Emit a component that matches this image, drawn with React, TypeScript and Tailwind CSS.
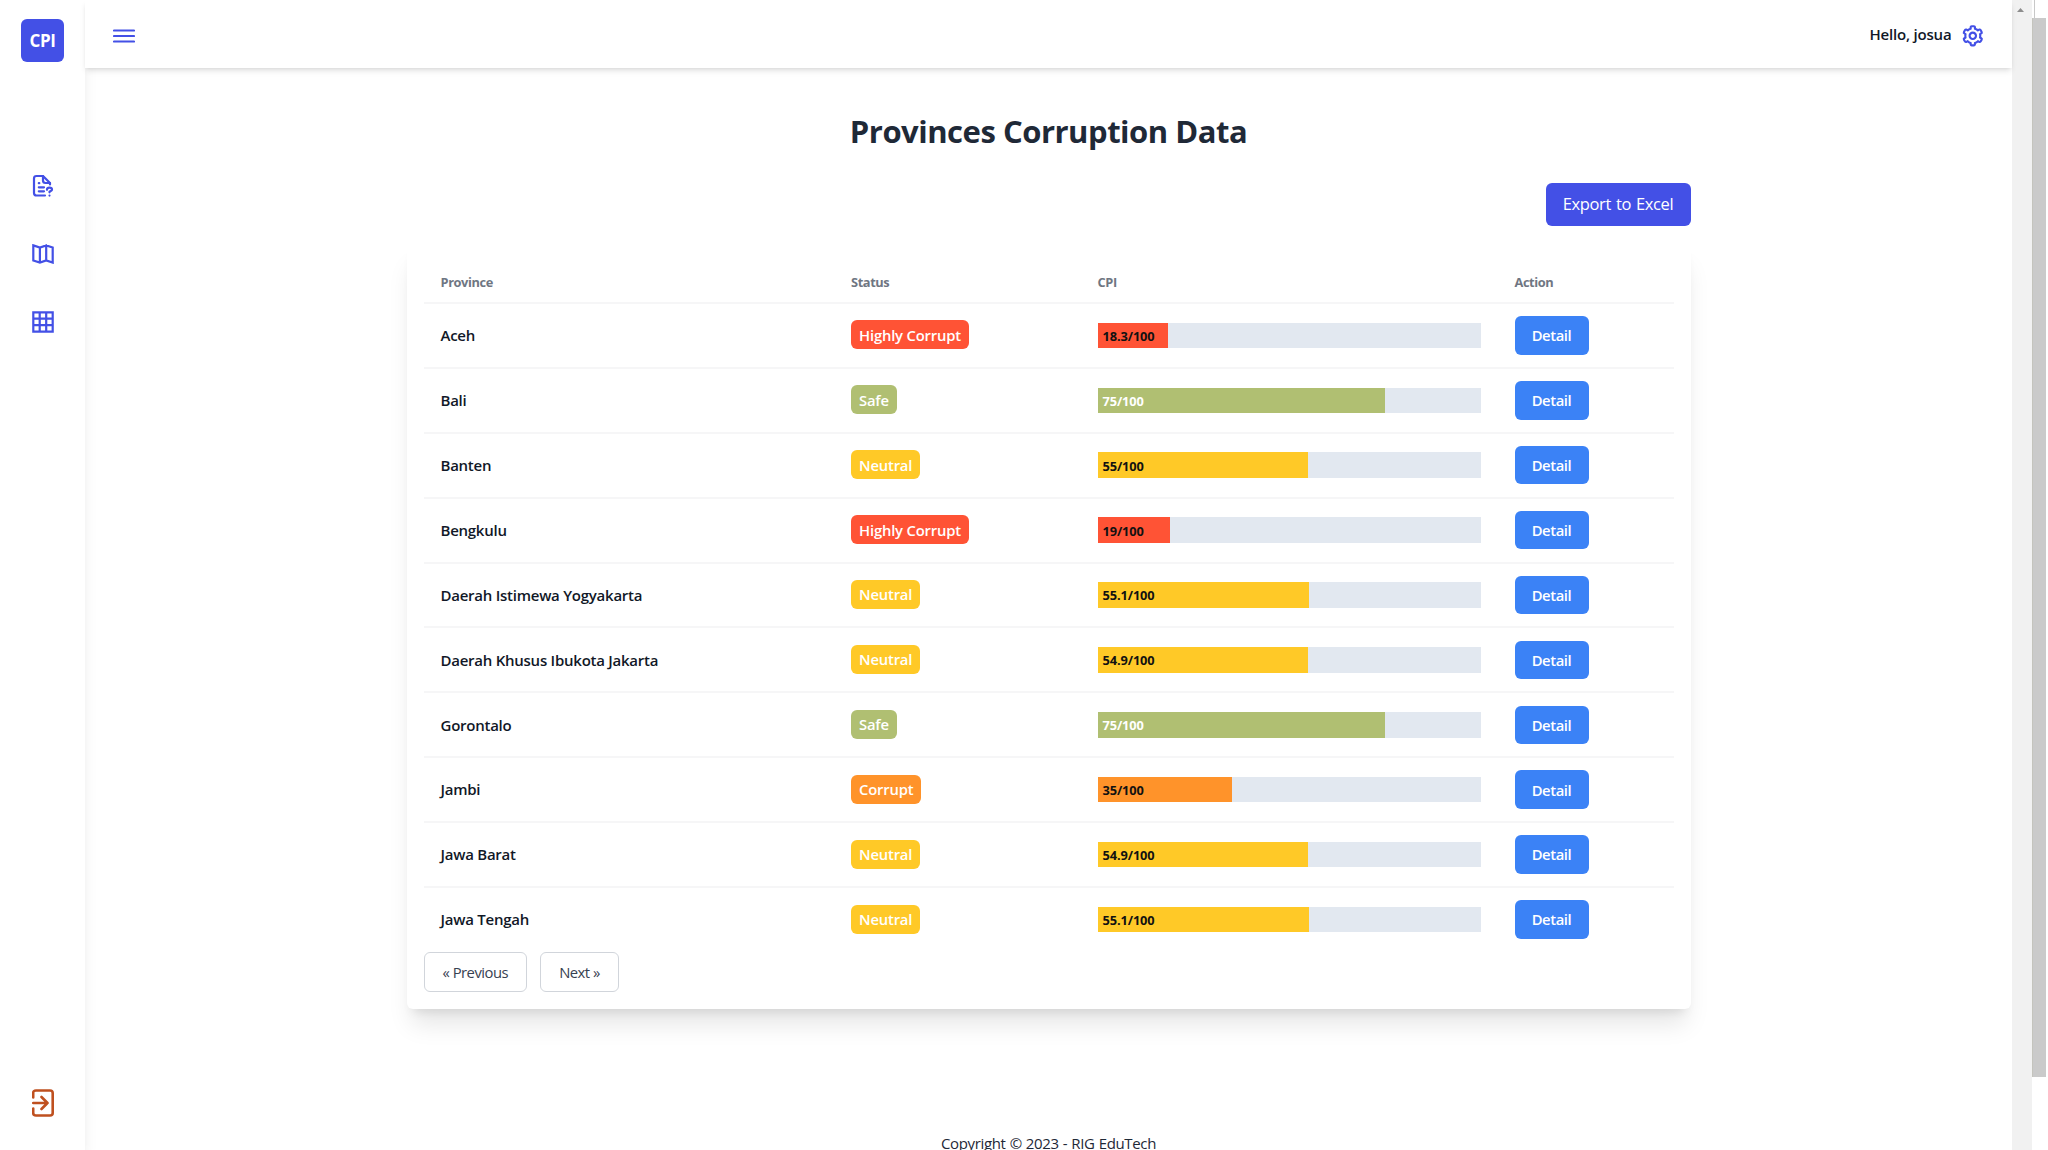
import type { ReactNode } from "react";
import { BiCog } from "react-icons/bi";

type Status = "Highly Corrupt" | "Corrupt" | "Neutral" | "Safe";

const COLORS: Record<Status, string> = {
  "Highly Corrupt": "bg-[#ff5335]",
  Corrupt: "bg-[#ff932a]",
  Neutral: "bg-[#ffc927]",
  Safe: "bg-[#b0bf72]",
};

const ROWS: { name: string; status: Status; cpi: number }[] = [
  { name: "Aceh", status: "Highly Corrupt", cpi: 18.3 },
  { name: "Bali", status: "Safe", cpi: 75 },
  { name: "Banten", status: "Neutral", cpi: 55 },
  { name: "Bengkulu", status: "Highly Corrupt", cpi: 19 },
  { name: "Daerah Istimewa Yogyakarta", status: "Neutral", cpi: 55.1 },
  { name: "Daerah Khusus Ibukota Jakarta", status: "Neutral", cpi: 54.9 },
  { name: "Gorontalo", status: "Safe", cpi: 75 },
  { name: "Jambi", status: "Corrupt", cpi: 35 },
  { name: "Jawa Barat", status: "Neutral", cpi: 54.9 },
  { name: "Jawa Tengah", status: "Neutral", cpi: 55.1 },
];

const GRID = "grid grid-cols-[410.5px_246.5px_417px_1fr] items-center";

function Icon({ w, h, children }: { w: number; h: number; children: ReactNode }) {
  return (
    <svg width={w} height={h} viewBox={`0 0 ${w} ${h}`} fill="none" stroke="currentColor" strokeWidth="2.200" strokeLinecap="round" strokeLinejoin="round">
      {children}
    </svg>
  );
}

function Sidebar() {
  return (
    <aside className="flex w-[85px] shrink-0 flex-col items-center bg-white pt-[19px] pb-[33px] text-[#4350e6] shadow-lg">
      <div className="flex h-[43px] w-[43px] items-center justify-center rounded-md bg-[#4350e6] text-[17px] font-bold tracking-[-0.4px] text-white">
        CPI
      </div>
      <nav className="mt-[112px] flex flex-col items-center">
        <a className="flex h-6 items-center">
          <Icon w={22} h={24}>
            <path d="M13 21.500H4.500Q2 21.500 2 19V4.500Q2 2 4.500 2H11L18 9V10.500" />
            <path d="M11 2V6.500Q11 9 13.500 9H18" />
            <path d="M6.800 9.200H7.300M6.800 13.300H12M6.800 17.300H12" />
            <path d="M15 15.800Q15 13.600 17.500 13.600T20 15.600Q20 16.900 17.500 17.600V18.300M17.500 21.500V21.600" />
          </Icon>
        </a>
        <a className="mt-11 flex h-6 items-center">
          <Icon w={22} h={20}>
            <path d="M1.300 1.400 7.900 3.500 14.200 1.400 20.700 3.500V18.600L14.200 16.500 7.900 18.600 1.300 16.500ZM7.900 3.500V18.600M14.200 1.400V16.500" strokeLinejoin="miter" />
          </Icon>
        </a>
        <a className="mt-11 flex h-6 items-center">
          <Icon w={22} h={22}>
            <path d="M1.300 1.300H20.700V20.700H1.300ZM1.300 7.700H20.700M1.300 14.200H20.700M7.700 1.300V20.700M14.200 1.300V20.700" strokeLinejoin="miter" />
          </Icon>
        </a>
      </nav>
      <a className="mt-auto text-[#bf501f]">
        <Icon w={22} h={28}>
          <path d="M1.200 8.500V4Q1.200 1.500 4 1.500H18Q20.700 1.500 20.700 4V24Q20.700 26.500 18 26.500H4Q1.200 26.500 1.200 24V19.500M1.200 14H15.500M9.500 8 15.500 14 9.500 20" strokeWidth="2.600" />
        </Icon>
      </a>
    </aside>
  );
}

function Header() {
  return (
    <header className="relative flex h-[68px] shrink-0 items-center justify-between bg-white pr-[26px] pl-7 shadow-md">
      <span className="mt-[3px] text-[#4350e6]">
        <Icon w={22} h={14}>
          <path d="M1 1.500H21M1 7H21M1 12.500H21" />
        </Icon>
      </span>
      <div className="flex items-center gap-[9px] text-[#111827]">
        <span className="text-[15px] font-semibold tracking-[-0.2px]">Hello, josua</span>
        <BiCog size={25.6} className="mt-[3px] text-[#4350e6]" />
      </div>
    </header>
  );
}

function Table() {
  return (
    <section className="mt-[17px] w-[1284px] rounded-md bg-white px-[17px] pt-[17px] pb-[17px] shadow-xl">
      <div className={`${GRID} h-[44px] border-b-2 border-[#f6f6f7] pt-[3px] pl-[17px] text-[12.8px] font-bold tracking-[-0.4px] text-[#6f7682]`}>
        <span>Province</span>
        <span>Status</span>
        <span>CPI</span>
        <span>Action</span>
      </div>
      {ROWS.map((r, i) => (
        <div
          key={r.name}
          className={`${GRID} pl-[17px] ${i < ROWS.length - 1 ? "h-[64.9px] border-b-2 border-[#f6f6f7]" : "h-[63px]"}`}
        >
          <span className="text-[15px] font-semibold tracking-[-0.25px] text-[#111827]">{r.name}</span>
          <div className="flex pb-px">
            <span className={`flex h-[29px] items-center rounded-md px-2 text-[14.8px] font-semibold tracking-[-0.18px] text-white ${COLORS[r.status]}`}>
              {r.status}
            </span>
          </div>
          <div className="h-[25.6px] w-[383px] bg-[#e2e8f0]">
            <div
              className={`flex h-full items-center pt-0.5 pl-[5px] text-[12.8px] font-bold tracking-[-0.1px] ${COLORS[r.status]} ${r.status === "Safe" ? "text-white" : "text-[#111]"}`}
              style={{ width: `${r.cpi}%` }}
            >
              {r.cpi}/100
            </div>
          </div>
          <button className="h-[38.4px] w-[74px] rounded-md bg-[#3b82f6] text-[14.8px] font-semibold tracking-[-0.4px] text-white">
            Detail
          </button>
        </div>
      ))}
      <div className="flex gap-[13px] pt-px text-[14.8px] tracking-[-0.5px] text-[#374151] [word-spacing:1.5px]">
        <button className="h-10 w-[103.5px] rounded-md border border-[#d1d5db]">« Previous</button>
        <button className="h-10 w-[79px] rounded-md border border-[#d1d5db]">Next »</button>
      </div>
    </section>
  );
}

function Scrollbars() {
  return (
    <div className="flex w-9 shrink-0">
      <div className="flex w-5 flex-col items-center bg-[#f1f1f1] pt-2 pr-[3px]">
        <svg width="7" height="4" viewBox="0 0 7 4">
          <path d="M0 4 3.500 0 7 4Z" fill="#8d8d8d" />
        </svg>
      </div>
      <div className="w-4 bg-white pr-0.5">
        <div className="ml-0.5 h-[18px] w-px bg-[#c8c8c8]" />
        <div className="h-[1059px] border-l border-[#c4c4bd] bg-[#cacaca]" />
      </div>
    </div>
  );
}

export default function App() {
  return (
    <div className='flex h-[1150px] w-[2048px] overflow-hidden bg-white font-["Open_Sans","Noto_Sans",sans-serif]'>
      <Sidebar />
      <div className="flex min-w-0 flex-1 flex-col">
        <Header />
        <main className="flex flex-1 flex-col items-center text-[#1f2937]">
          <h1 className="mt-[41px] text-[31px] leading-[44px] font-bold tracking-[-0.48px]">Provinces Corruption Data</h1>
          <div className="mt-[30px] flex w-[1284px] justify-end">
            <button className="h-[43px] w-[145px] rounded-md bg-[#4350e6] text-[16.5px] tracking-[-0.35px] text-white [word-spacing:1px]">
              Export to Excel
            </button>
          </div>
          <Table />
          <footer className="mt-[122px] text-[15px] leading-6 tracking-[-0.35px] whitespace-nowrap [word-spacing:0.5px]">Copyright © 2023 - RIG EduTech</footer>
        </main>
      </div>
      <Scrollbars />
    </div>
  );
}
